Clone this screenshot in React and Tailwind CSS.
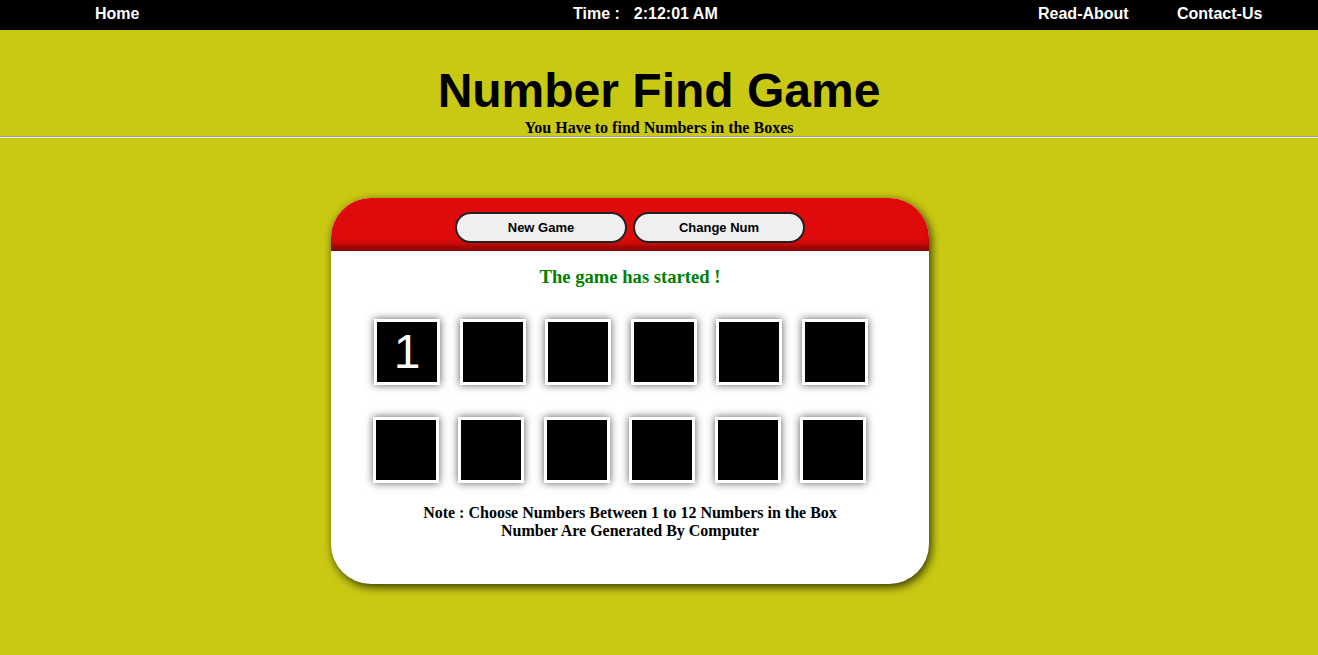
import React, { useState } from 'react'

const sans = { fontFamily: '"Liberation Sans", Arial, sans-serif' }
const serif = { fontFamily: '"Liberation Serif", "Times New Roman", serif' }

const Box = ({ value }) => (
  <div className="w-[66px] h-[66px] border-[3px] border-white bg-black shadow-[0_0_8px_rgba(0,0,0,0.65)] flex items-center justify-center">
    {value && (
      <span className="text-white text-[48px] leading-none" style={sans}>
        {value}
      </span>
    )}
  </div>
)

const App = () => {
  const [boxes] = useState(['1', '', '', '', '', '', '', '', '', '', '', ''])

  return (
    <div className="min-h-[655px] bg-[#c9c913]">
      {/* Top bar */}
      <nav className="h-[30px] bg-black flex items-center pl-[95px] pb-[2px] text-white text-[16px] font-bold" style={sans}>
        <span className="w-[478px]">Home</span>
        <span className="w-[465px] flex">
          <span>Time :</span>
          <span className="ml-[14px]">2:12:01 AM</span>
        </span>
        <span className="w-[139px]">Read-About</span>
        <span>Contact-Us</span>
      </nav>

      {/* Heading */}
      <header className="pt-[33px] text-center text-black">
        <h1 className="text-[48px] font-bold leading-[55px]" style={sans}>
          Number Find Game
        </h1>
        <p className="text-[16px] font-bold leading-[17px] mt-[1px]" style={serif}>
          You Have to find Numbers in the Boxes
        </p>
      </header>
      <hr className="border-0 border-t border-t-[#9c9ca8] border-b border-b-[#e6e6e6] h-0" />

      {/* Game card */}
      <div className="ml-[331px] mt-[60px] w-[598px] rounded-[40px] bg-white overflow-hidden shadow-[2px_3px_10px_rgba(0,0,0,0.75)]">
        <div className="h-[53px] bg-[#df0b0b] pt-[14px] flex justify-center gap-[6px] shadow-[inset_0_-8px_7px_-3px_rgba(60,0,0,0.6)]">
          <button className="w-[172px] h-[31px] rounded-full bg-[#efefef] border-2 border-[#222] text-[13px] font-bold text-black" style={sans}>
            New Game
          </button>
          <button className="w-[172px] h-[31px] rounded-full bg-[#efefef] border-2 border-[#222] text-[13px] font-bold text-black" style={sans}>
            Change Num
          </button>
        </div>

        <div className="pt-[15px] pb-[44px]">
          <p className="text-center text-[18.6px] font-bold text-[#008000] leading-[21px]" style={serif}>
            The game has started !
          </p>

          <div className="mt-[32px] pl-[43px] flex gap-[19.6px]">
            {boxes.slice(0, 6).map((v, i) => (
              <Box key={i} value={v} />
            ))}
          </div>
          <div className="mt-[32px] pl-[42px] flex gap-[19.4px]">
            {boxes.slice(6).map((v, i) => (
              <Box key={i} value={v} />
            ))}
          </div>

          <div className="mt-[21px] text-center text-[16px] font-bold leading-[18px] text-black" style={serif}>
            <p>Note : Choose Numbers Between 1 to 12 Numbers in the Box</p>
            <p>Number Are Generated By Computer</p>
          </div>
        </div>
      </div>
    </div>
  )
}

export default App
